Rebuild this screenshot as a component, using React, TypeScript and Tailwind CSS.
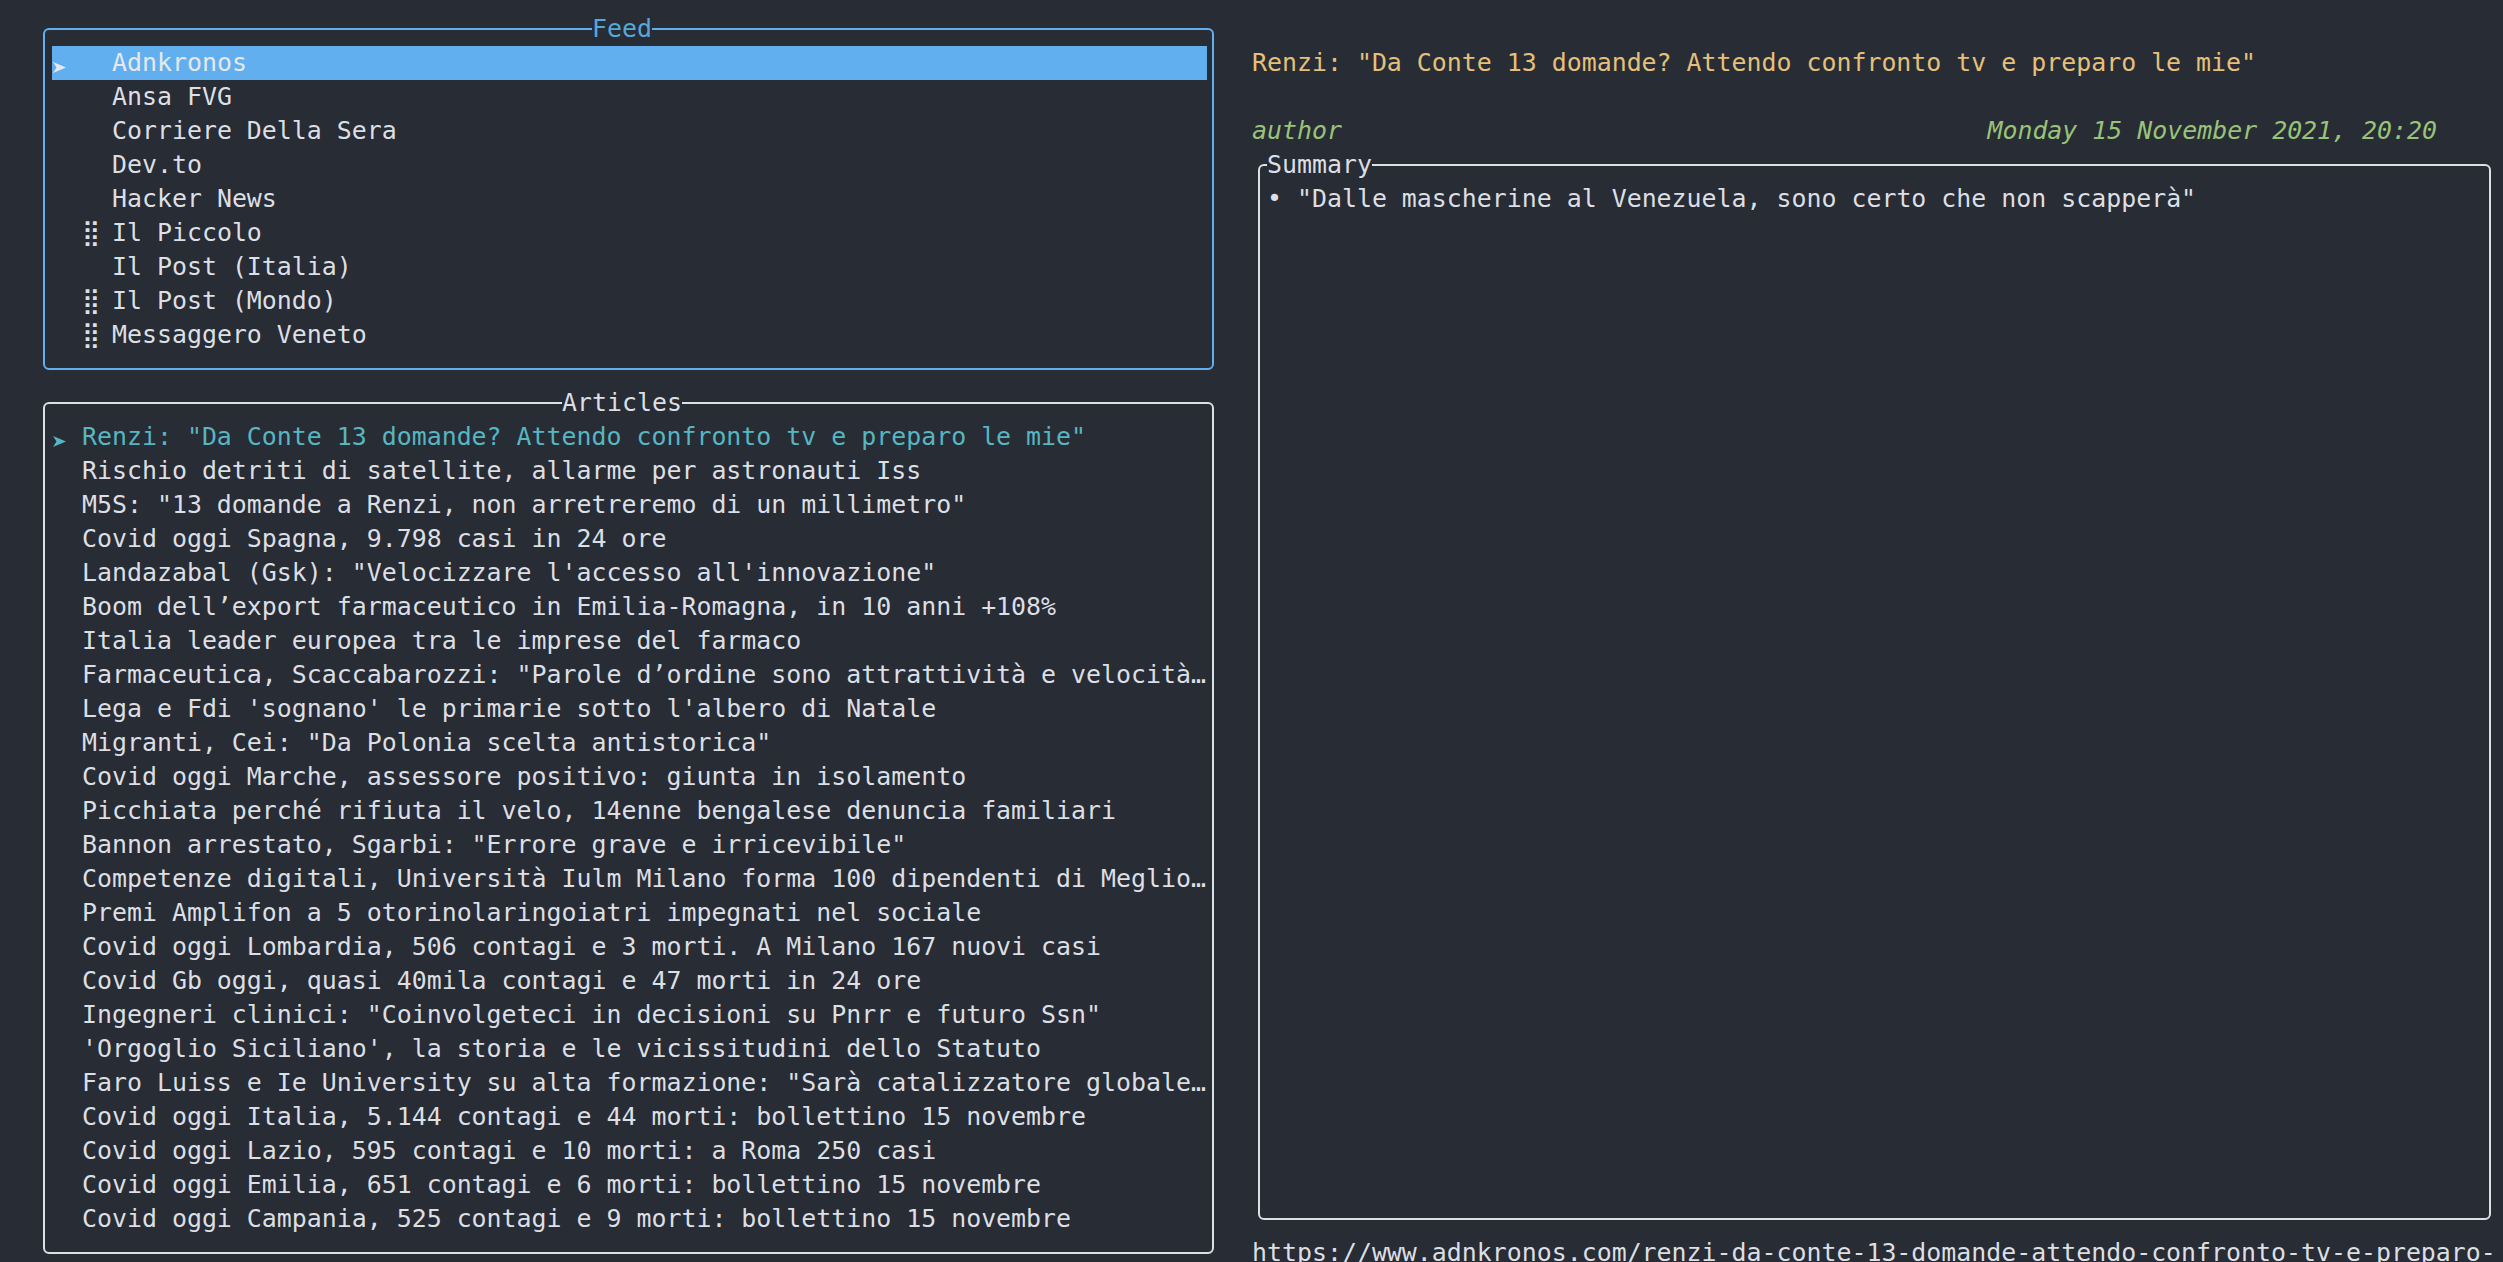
import React from "react";

const feeds: { name: string; selected?: boolean; mark?: boolean }[] = [
  { name: "Adnkronos", selected: true },
  { name: "Ansa FVG" },
  { name: "Corriere Della Sera" },
  { name: "Dev.to" },
  { name: "Hacker News" },
  { name: "Il Piccolo", mark: true },
  { name: "Il Post (Italia)" },
  { name: "Il Post (Mondo)", mark: true },
  { name: "Messaggero Veneto", mark: true },
];

const articles: string[] = [
  'Renzi: "Da Conte 13 domande? Attendo confronto tv e preparo le mie"',
  "Rischio detriti di satellite, allarme per astronauti Iss",
  'M5S: "13 domande a Renzi, non arretreremo di un millimetro"',
  "Covid oggi Spagna, 9.798 casi in 24 ore",
  'Landazabal (Gsk): "Velocizzare l\'accesso all\'innovazione"',
  "Boom dell\u2019export farmaceutico in Emilia-Romagna, in 10 anni +108%",
  "Italia leader europea tra le imprese del farmaco",
  'Farmaceutica, Scaccabarozzi: "Parole d\u2019ordine sono attrattività e velocità…',
  "Lega e Fdi 'sognano' le primarie sotto l'albero di Natale",
  'Migranti, Cei: "Da Polonia scelta antistorica"',
  "Covid oggi Marche, assessore positivo: giunta in isolamento",
  "Picchiata perché rifiuta il velo, 14enne bengalese denuncia familiari",
  'Bannon arrestato, Sgarbi: "Errore grave e irricevibile"',
  "Competenze digitali, Università Iulm Milano forma 100 dipendenti di Meglio…",
  "Premi Amplifon a 5 otorinolaringoiatri impegnati nel sociale",
  "Covid oggi Lombardia, 506 contagi e 3 morti. A Milano 167 nuovi casi",
  "Covid Gb oggi, quasi 40mila contagi e 47 morti in 24 ore",
  'Ingegneri clinici: "Coinvolgeteci in decisioni su Pnrr e futuro Ssn"',
  "'Orgoglio Siciliano', la storia e le vicissitudini dello Statuto",
  'Faro Luiss e Ie University su alta formazione: "Sarà catalizzatore globale…',
  "Covid oggi Italia, 5.144 contagi e 44 morti: bollettino 15 novembre",
  "Covid oggi Lazio, 595 contagi e 10 morti: a Roma 250 casi",
  "Covid oggi Emilia, 651 contagi e 6 morti: bollettino 15 novembre",
  "Covid oggi Campania, 525 contagi e 9 morti: bollettino 15 novembre",
];

function Arrow({ color }: { color: string }) {
  return (
    <svg width="14" height="11" viewBox="0 0 14 11" className="mt-[16px] ml-[1px]">
      <polygon points="0,0 13,5.5 0,11 3.5,5.5" fill={color} />
    </svg>
  );
}

export default function App() {
  return (
    <div className="w-[2503px] h-[1262px] overflow-hidden bg-[#282c34] text-[#dcdfe4] font-['DejaVu_Sans_Mono',monospace] text-[24.9px] leading-[34px]">
      <div className="flex pt-[12px]">
        {/* Left column */}
        <div className="ml-[43px] w-[1171px] flex flex-col shrink-0">
          <fieldset className="min-w-0 border-2 border-[#61afef] rounded-[6px] pl-[7px] pr-[5px] pb-[16px]">
            <legend className="ml-[540px] text-[#56a8d8] leading-[34px]">Feed</legend>
            {feeds.map((f) => (
              <div
                key={f.name}
                className={
                  f.selected
                    ? "flex h-[34px] whitespace-pre bg-[#61afef] text-[#e6e8ec]"
                    : "flex h-[34px] whitespace-pre"
                }
              >
                <div className="w-[30px] shrink-0">{f.selected ? <Arrow color="#e6e8ec" /> : null}</div>
                <div className="w-[30px] shrink-0">{f.mark ? "\u28ff" : ""}</div>
                <div>{f.name}</div>
              </div>
            ))}
          </fieldset>

          <fieldset className="mt-[16px] min-w-0 border-2 border-[#dcdfe4] rounded-[6px] pl-[7px] pr-[5px] pb-[16px]">
            <legend className="ml-[510px] text-[#dcdfe4] leading-[34px]">Articles</legend>
            {articles.map((a, i) => (
              <div
                key={i}
                className={
                  i === 0
                    ? "flex h-[34px] whitespace-pre text-[#56b6c2]"
                    : "flex h-[34px] whitespace-pre"
                }
              >
                <div className="w-[30px] shrink-0">{i === 0 ? <Arrow color="#56b6c2" /> : null}</div>
                <div className="overflow-hidden">{a}</div>
              </div>
            ))}
          </fieldset>
        </div>

        {/* Right column */}
        <div className="ml-[38px] w-[1245px] flex flex-col shrink-0">
          <div className="h-[34px]" />
          <div className="h-[34px] whitespace-pre text-[#e5c07b]">
            Renzi: "Da Conte 13 domande? Attendo confronto tv e preparo le mie"
          </div>
          <div className="h-[34px]" />
          <div className="h-[34px] flex justify-between pr-[60px] italic text-[#98c379] whitespace-pre">
            <span>author</span>
            <span>Monday 15 November 2021, 20:20</span>
          </div>
          <fieldset className="ml-[6px] w-[1233px] min-w-0 border-2 border-[#dcdfe4] rounded-[6px] pl-[7px] pr-[5px] pb-[16px]">
            <legend className="leading-[34px] text-[#dcdfe4]">Summary</legend>
            <div className="h-[1020px] whitespace-pre">• "Dalle mascherine al Venezuela, sono certo che non scapperà"</div>
          </fieldset>
          <div className="mt-[16px] h-[34px] whitespace-pre">
            https://www.adnkronos.com/renzi-da-conte-13-domande-attendo-confronto-tv-e-preparo-
          </div>
        </div>
      </div>
    </div>
  );
}
